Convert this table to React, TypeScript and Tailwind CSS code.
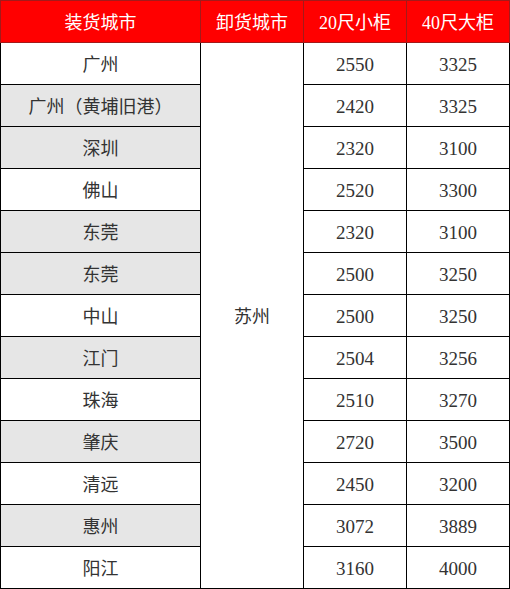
import React from "react";

const rows = [
  { city: "广州", gray: false, a: "2550", b: "3325" },
  { city: "广州（黄埔旧港）", gray: true, a: "2420", b: "3325" },
  { city: "深圳", gray: true, a: "2320", b: "3100" },
  { city: "佛山", gray: false, a: "2520", b: "3300" },
  { city: "东莞", gray: true, a: "2320", b: "3100" },
  { city: "东莞", gray: true, a: "2500", b: "3250" },
  { city: "中山", gray: false, a: "2500", b: "3250" },
  { city: "江门", gray: true, a: "2504", b: "3256" },
  { city: "珠海", gray: false, a: "2510", b: "3270" },
  { city: "肇庆", gray: true, a: "2720", b: "3500" },
  { city: "清远", gray: false, a: "2450", b: "3200" },
  { city: "惠州", gray: true, a: "3072", b: "3889" },
  { city: "阳江", gray: false, a: "3160", b: "4000" },
];

const font = "[font-family:'Liberation_Serif','Noto_Sans_CJK_SC',serif]";

export default function App() {
  return (
    <div className="w-[510px] h-[589px] bg-white">
      <table
        className={`table-fixed border-collapse w-[509px] text-[18px] text-[#333] ${font}`}
      >
        <colgroup>
          <col className="w-[200px]" />
          <col className="w-[103px]" />
          <col className="w-[103px]" />
          <col className="w-[103px]" />
        </colgroup>
        <thead>
          <tr className="h-[42px] bg-[#ff0000] text-white">
            <th className="border border-[#a31a1a] font-normal pt-[3px]">装货城市</th>
            <th className="border border-[#a31a1a] font-normal pt-[3px]">卸货城市</th>
            <th className="border border-[#a31a1a] font-normal pt-[3px]">20尺小柜</th>
            <th className="border border-[#a31a1a] font-normal pt-[3px]">40尺大柜</th>
          </tr>
        </thead>
        <tbody>
          {rows.map((r, i) => (
            <tr key={i} className="h-[42px]">
              <td
                className={`border border-black text-center pt-[3px] ${
                  r.gray ? "bg-[#e6e6e6]" : "bg-white"
                }`}
              >
                {r.city}
              </td>
              {i === 0 && (
                <td rowSpan={13} className="border border-black text-center pt-[3px]">
                  苏州
                </td>
              )}
              <td className="border border-black text-center text-[19px] pt-[3px]">{r.a}</td>
              <td className="border border-black text-center text-[19px] pt-[3px]">{r.b}</td>
            </tr>
          ))}
        </tbody>
      </table>
    </div>
  );
}
